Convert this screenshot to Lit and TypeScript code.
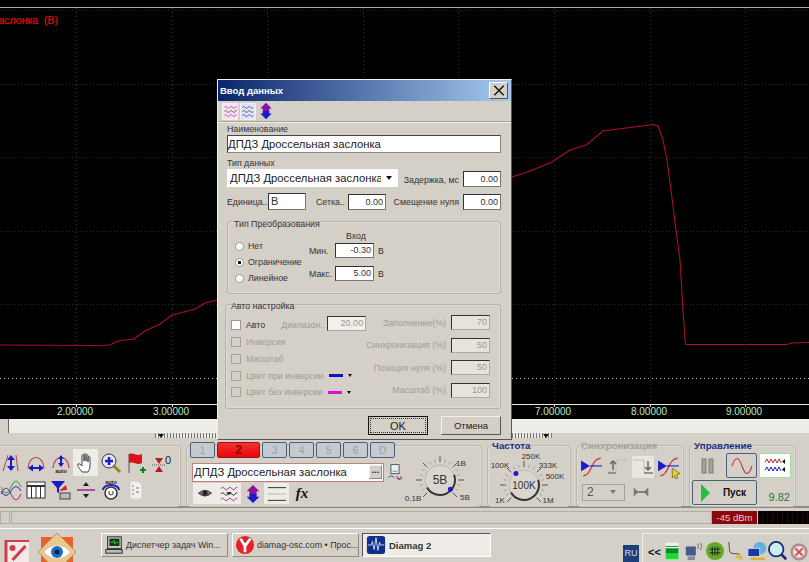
import {LitElement, css, html, svg} from 'lit';
import {customElement} from 'lit/decorators.js';

const CHANNEL = 'ДПДЗ Дроссельная заслонка';

const TRACE =
  '0,345 100,345.5 110,345 118,341 134,339 145,331 160,324 172,315 180,313 195,309 205,303 215,300.5 ' +
  '300,280 512,177 530,171 552,162 570,150 586,145 603,131 634,127 654,124.5 658,126 663,140 667,160 ' +
  '671,190 676,230 680,260 683,310 685,340 686,344.5 787,344.5 792,343 809,342.5';

const icon = (content: unknown, w = 22, h = 22) =>
  html`<svg width=${w} height=${h} viewBox="0 0 22 22" fill="none">${content}</svg>`;

const arrowsV = (c = '#1a1ac8') => svg`<path d="M11 3l4 5h-3v6h3l-4 5-4-5h3V8H7z" fill=${c}/>`;
const arrowsH = svg`<path d="M3 16l5-3.500V15h6v-2.500l5 3.500-5 3.500V17H8v2.500z" fill="#1a1ac8"/>`;
const arch = svg`<path d="M3 16C4 2 18 2 19 16" stroke="#c04048" stroke-width="1.200"/>`;
const triple = svg`
  <path d="M2 5q2-3 4 0t4 0 4 0 4 0 2-1" stroke="#a020a0"/>
  <path d="M2 11q2-3 4 0t4 0 4 0 4 0 2-1" stroke="#222"/>
  <path d="M2 17q2-3 4 0t4 0 4 0 4 0 2-1" stroke="#a020a0"/>`;
const updown = svg`
  <path d="M11 1l7 7h-3v3H7V8H4z" fill="#8a10a0"/>
  <path d="M11 21l7-7h-3v-3H7v3H4z" fill="#1a1ac8"/>`;
const trigger = svg`
  <path d="M1 5l8 5-8 5z" fill="#1a1ac8"/>
  <path d="M3 19C11 19 10 3 19 3" stroke="#d04040" stroke-width="1.200"/>
  <path d="M9 10h11" stroke="#1a1ac8"/>`;

const LEFT_TOP = [
  icon(svg`<path d="M3 19L8 3M16 3l2 16" stroke="#c04048"/>${arrowsV()}`),
  icon(svg`${arch}${arrowsH}`),
  icon(svg`${arch}<path d="M11 3l3 4h-2v4h2l-3 4-3-4h2V7H8z" fill="#1a1ac8"/><text x="11" y="21" text-anchor="middle" class="tiny">auto</text>`),
  icon(svg`<path d="M7 20c-2-3-5-6-4-8 1-1 3 1 4 2V4c0-2 2-2 2 0v5V3c0-2 2-2 2 0v6V4c0-2 2-2 2 0v6V6c0-2 2-2 2 0v8c0 3-1 4-2 6z" fill="#fff" stroke="#444"/>`),
  icon(svg`<path d="M13 13l7 7" stroke="#a08020" stroke-width="3"/><circle cx="9" cy="9" r="7" fill="#dfe8f5" stroke="#333"/><path d="M9 5v8M5 9h8" stroke="#1a1ac8" stroke-width="2.500"/>`),
  icon(svg`<path d="M4 2v19" stroke="#555"/><path d="M4 2c5-2 8 3 13 0v9c-5 3-8-2-13 0z" fill="#e01018"/><path d="M15 18h6M18 15v6" stroke="#108020" stroke-width="2"/>`),
  icon(svg`<path d="M2 13h14" stroke="#555" stroke-dasharray="1 1"/><path d="M5 6l4 6 4-6zM5 20l4-6 4 6z" fill="#c01820"/><text x="15" y="12" class="zero">0</text>`),
];

const LEFT_BOTTOM = [
  icon(svg`<path d="M1 15q5-12 10 0t10 0" stroke="#a020a0"/><path d="M1 8q5 12 10 0t10 0" stroke="#30a030"/><path d="M1 12q5 9 10 0t10 0" stroke="#2030c0"/>`),
  icon(svg`<rect x="2" y="3" width="18" height="16" fill="#fff" stroke="#333"/><path d="M2 7h18" stroke="#333" stroke-width="2"/><path d="M6.500 7v12M11 7v12M15.500 7v12" stroke="#333"/>`),
  icon(svg`<path d="M1 2h14l-6 7v5l-2-1V9z" fill="#1a1ac8"/><path d="M9 12l7-6 1 5z" fill="#e02020"/><rect x="10" y="14" width="10" height="6" fill="#bbb" stroke="#444"/>`),
  icon(svg`<path d="M2 11h18" stroke="#a020a0" stroke-width="1.500"/><path d="M11 3l3 4H8zM11 19l3-4H8z" fill="#222"/>`),
  icon(svg`<text x="11" y="5" text-anchor="middle" class="tiny">auto</text><path d="M3 11a8 5 0 0 1 16 0" stroke="#1a1ac8" stroke-width="2"/><circle cx="11" cy="14" r="6" fill="#fff" stroke="#333" stroke-width="1.500"/><path d="M9 12v3q2 2 4 0v-3" stroke="#333"/>`),
  icon(svg`<path d="M5 2h8l4 4v14H5z" fill="#f2f0ea" stroke="#ccc"/><path d="M7 7h2M7 11h2M7 15h2M11 9h3M11 13h3" stroke="#777"/>`),
];

const DIALOG_TOOLS = [
  ['tool pink', icon(triple, 15, 15)],
  ['tool blue', icon(svg`
    <path d="M2 5q2-3 4 0t4 0 4 0 4 0" stroke="#1a1ac8"/>
    <path d="M2 11q2-3 4 0t4 0 4 0 4 0" stroke="#222"/>
    <path d="M2 17q2-3 4 0t4 0 4 0 4 0" stroke="#1a1ac8"/>`, 15, 15)],
  ['tool', icon(updown, 18, 18)],
] as const;

const TRAY = [
  svg`<rect x="3" y="2" width="14" height="18" fill="#e8f5e8"/><path d="M3 6h14" stroke="#084"/><rect x="3" y="8" width="14" height="6" fill="#0a8a20"/><rect x="3" y="14" width="14" height="6" fill="#10e030"/>`,
  svg`<rect x="2" y="6" width="11" height="10" fill="#4a5a90"/><rect x="4" y="17" width="8" height="4" fill="#889"/><path d="M15 3q2 3 0 6M18 2q3 4 0 8" stroke="#667"/>`,
  svg`<circle cx="11" cy="11" r="10" fill="#6aa82a"/><path d="M5 9h12M5 13h12M8 6v10M11 6v10M14 6v10" stroke="#123"/>`,
  svg`<path d="M3 1l1 10q1 3 4 3h6l3 6" stroke="#445" fill="none"/><path d="M12 14l7 3-3 4-6-3z" fill="#d8c040"/>`,
  svg`<circle cx="14" cy="8" r="7" fill="#60b0e0"/><rect x="1" y="8" width="13" height="9" fill="#1a3aa0" stroke="#dde"/><rect x="4" y="18" width="16" height="3" fill="#e0b040"/>`,
  svg`<circle cx="9" cy="9" r="8" fill="#c8f0f0" stroke="#1a2a70" stroke-width="2"/><path d="M15 15l5 5" stroke="#1a2a70" stroke-width="3"/>`,
  svg`<circle cx="11" cy="12" r="8" fill="#e8e4e0" stroke="#b09090" stroke-width="3"/><path d="M7 8l8 8M15 8l-8 8" stroke="#e04050" stroke-width="2"/>`,
];

type Tick = {angle: number; long: boolean};

// ticks on a knob run clockwise from lower left to lower right
const knobTicks = (count: number, every: number): Tick[] =>
  Array.from({length: count}, (_, i) => ({
    angle: 135 + (270 * i) / (count - 1),
    long: i % every === 0,
  }));

const knob = (
  cx: number,
  cy: number,
  r: number,
  value: string,
  markerAngle: number,
  labels: [string, number, number][],
  w: number,
  h: number,
) => {
  const rad = (a: number) => (a * Math.PI) / 180;
  return html`<svg class="dial" width=${w} height=${h} viewBox="0 0 ${w} ${h}">
    ${knobTicks(19, 3).map((t) => {
      const inner = r + 3;
      const outer = r + (t.long ? 9 : 6);
      return svg`<line
        x1=${cx + inner * Math.cos(rad(t.angle))}
        y1=${cy + inner * Math.sin(rad(t.angle))}
        x2=${cx + outer * Math.cos(rad(t.angle))}
        y2=${cy + outer * Math.sin(rad(t.angle))}
        stroke=${t.long ? '#555' : '#a5a299'}
      />`;
    })}
    <circle cx=${cx} cy=${cy} r=${r} fill="#d9d6cf" stroke="#bbb8b0" />
    <path
      d="M${cx + r * Math.cos(rad(150))} ${cy + r * Math.sin(rad(150))}
         A${r} ${r} 0 0 0 ${cx + r * Math.cos(rad(-20))} ${cy + r * Math.sin(rad(-20))}"
      fill="none"
      stroke="#333"
      stroke-width="2"
    />
    <circle
      cx=${cx + (r - 1) * Math.cos(rad(markerAngle))}
      cy=${cy + (r - 1) * Math.sin(rad(markerAngle))}
      r="2.500"
      fill="#1a1ac8"
    />
    <text x=${cx} y=${cy + 4} text-anchor="middle" class="knob-value">${value}</text>
    ${labels.map(
      ([t, x, y]) => svg`<text x=${x} y=${y} text-anchor="middle" class="knob-label">${t}</text>`,
    )}
  </svg>`;
};

@customElement('app-root')
export class AppRoot extends LitElement {
  static styles = css`
    :host {
      display: block;
      position: relative;
      width: 809px;
      height: 562px;
      overflow: hidden;
      background: #d4d0c8;
      font-family: 'Liberation Sans', Arial, sans-serif;
      font-size: 8.800px;
      color: #333;
    }

    svg {
      display: block;
      flex: none;
    }

    .tiny {
      font: bold 5.500px 'Liberation Sans', sans-serif;
      fill: #222;
    }

    .zero {
      font: 11px 'Liberation Sans', sans-serif;
      fill: #222;
    }

    .plot {
      width: 809px;
      height: 419px;
      background: #000;
    }

    .plot text {
      font: 10px 'Liberation Sans', sans-serif;
    }

    .plot text.caption {
      font-size: 10.500px;
      white-space: pre;
      stroke: #e01010;
      stroke-width: 0.200px;
    }

    .strip {
      display: flex;
      height: 14px;
      background: #efede7;
    }

    .strip-btn {
      width: 8px;
      background: #d4d0c8;
      border-right: 1px solid #666;
    }

    .splitter {
      display: flex;
      height: 7px;
      padding-left: 155px;
    }

    .splitter-handle {
      display: flex;
      justify-content: space-between;
      align-items: center;
      box-sizing: border-box;
      width: 397px;
      height: 5px;
      padding: 0 3px;
      background: repeating-linear-gradient(90deg, #777 0 1px, #e8e6e0 1px 3px);
    }

    .splitter-handle i {
      border: 3px solid transparent;
      border-top: 4px solid #111;
      border-bottom: 0;
    }

    .panels {
      display: flex;
      gap: 5px;
      box-sizing: border-box;
      height: 68px;
      padding-top: 5px;
      margin-left: -5px;
      border-bottom: 2px solid #8f8c85;
    }

    .panel {
      box-sizing: border-box;
      height: 62px;
      border: 1px solid #bdb9b0;
      border-radius: 4px;
      box-shadow: inset 0 0 0 1px #dfdcd5;
    }

    .panel-title {
      margin: -6px 0 0 4px;
      font-size: 9.800px;
      font-weight: bold;
      line-height: 12px;
      color: #20308a;
      white-space: nowrap;
    }

    .panel-title.off {
      color: #a5a299;
    }

    .tools {
      display: grid;
      grid-template-columns: repeat(7, 25px);
      grid-auto-rows: 27px;
      align-content: center;
      width: 186px;
      padding-left: 2px;
    }

    .cell {
      display: flex;
      align-items: center;
      justify-content: center;
    }

    .cell.on {
      background: #eeece7;
    }

    .channel {
      position: relative;
      width: 296px;
      padding-left: 3px;
    }

    .tabs {
      display: flex;
      gap: 2px;
      margin-top: -4px;
    }

    .tab {
      display: flex;
      align-items: center;
      justify-content: center;
      box-sizing: border-box;
      width: 25px;
      height: 16px;
      border: 1px solid #4a6078;
      border-radius: 2px;
      background: #c3cbd0;
      color: #99a0a5;
      font-size: 10px;
    }

    .tab.active {
      width: 43px;
      background: linear-gradient(#f43030, #e80808);
      border-color: #a01010;
      color: #8a0808;
      font-size: 12px;
      font-weight: bold;
    }

    .channel-row {
      display: flex;
      align-items: center;
      margin: 4px 0 1px 2px;
      gap: 2px;
    }

    .channel-input {
      display: flex;
      align-items: center;
      justify-content: space-between;
      box-sizing: border-box;
      width: 192px;
      height: 19px;
      padding: 0 1px 0 1px;
      border: 1px solid #c08080;
      background: #fff;
      font-size: 11.300px;
      color: #222;
    }

    .more {
      width: 13px;
      height: 14px;
      background: #d4d0c8;
      border: 1px solid #888;
      border-top-color: #eee;
      border-left-color: #eee;
      box-sizing: border-box;
      text-align: center;
      line-height: 8px;
      font-size: 9px;
      font-weight: bold;
    }

    .channel-tools {
      display: flex;
      margin-left: 3px;
    }

    .channel-tools .cell {
      width: 23px;
      height: 21px;
    }

    .channel-tools .cell.wide {
      width: 25px;
    }

    .channel-tools .light {
      background: #eeece7;
    }

    .fx {
      margin-left: 3px;
      font: italic bold 15px 'Liberation Serif', serif;
      color: #111;
    }

    .channel .dial {
      position: absolute;
      right: 0;
      top: -2px;
    }

    .dial text.knob-label {
      font: 8px 'Liberation Sans', sans-serif;
      fill: #333;
    }

    .dial text.knob-value {
      font: 12px 'Liberation Sans', sans-serif;
      fill: #333;
    }

    .freq .dial text.knob-value {
      font-size: 10px;
    }

    .freq {
      width: 84px;
    }

    .sync {
      width: 108px;
    }

    .sync-row {
      display: flex;
      align-items: center;
      gap: 3px;
      margin: 3px 0 0 3px;
    }

    .sync-row.lower {
      margin-left: 5px;
    }

    .sync-select {
      display: flex;
      align-items: center;
      justify-content: space-between;
      box-sizing: border-box;
      width: 43px;
      height: 17px;
      padding: 0 8px 0 4px;
      border: 1px solid #a5a299;
      font-size: 12px;
      color: #555;
      margin-right: 1px;
    }

    .sync-select i,
    .select i {
      border: 3px solid transparent;
      border-top: 4px solid #777;
      border-bottom: 0;
    }

    .control {
      width: 107px;
    }

    .control-grid {
      display: grid;
      grid-template-columns: 32px 31px 32px;
      grid-template-rows: 25px 25px;
      gap: 2px;
      margin: 1px 0 0 2px;
    }

    .btn-plain,
    .btn-sine,
    .btn-traces {
      display: flex;
      align-items: center;
      justify-content: center;
    }

    .btn-sine {
      border: 1px solid #4a6078;
      border-radius: 2px;
    }

    .btn-traces {
      background: #fff;
      border: 1px solid #a0e0a0;
    }

    .btn-run {
      grid-column: span 2;
      display: flex;
      align-items: center;
      justify-content: space-between;
      padding: 0 10px 0 8px;
      border: 1px solid #4a6078;
      border-radius: 2px;
      font-size: 10px;
      font-weight: bold;
      color: #111;
    }

    .btn-run i {
      border: 7px solid transparent;
      border-left: 9px solid #20c040;
      border-right: 0;
      border-top-width: 9px;
      border-bottom-width: 9px;
    }

    .reading {
      display: flex;
      align-items: flex-end;
      justify-content: flex-end;
      padding: 0 1px 2px 0;
      font-size: 11px;
      color: #1a7a3a;
    }

    .status {
      display: flex;
      align-items: flex-start;
      height: 20px;
      padding-top: 3px;
      box-sizing: border-box;
    }

    .status-cell {
      box-sizing: border-box;
      width: 10px;
      height: 13px;
      border: 1px solid #b0ada5;
    }

    .status-fill {
      flex: 1;
      box-sizing: border-box;
      height: 13px;
      margin-left: 1px;
      border: 1px solid #b0ada5;
    }

    .dbm {
      width: 45px;
      height: 13px;
      background: #8a0810;
      color: #eec8c8;
      font-size: 9.500px;
      line-height: 13px;
      text-align: center;
    }

    .meter {
      width: 51px;
      height: 13px;
      margin-left: 1px;
      background: repeating-linear-gradient(90deg, #000 0 4px, #2a0405 4px 5px);
    }

    .taskbar {
      display: flex;
      box-sizing: border-box;
      height: 34px;
      border-top: 1px solid #fff;
      padding-top: 4px;
      overflow: hidden;
    }

    .start-icons {
      display: flex;
      align-items: flex-end;
      gap: 9px;
      width: 101px;
      height: 29px;
    }

    .task {
      display: flex;
      align-items: center;
      gap: 2px;
      box-sizing: border-box;
      width: 127px;
      height: 24px;
      margin-right: 4px;
      padding-left: 2px;
      border: 1px solid #8f8c85;
      border-top-color: #fff;
      border-left-color: #fff;
      font-size: 8.900px;
      white-space: nowrap;
      color: #333;
    }

    .task.active {
      width: 129px;
      margin-left: -1px;
      padding-left: 3px;
      gap: 3px;
      background: #eeece6;
      border-color: #fff;
      border-top-color: #555;
      border-left-color: #555;
      font-size: 9.500px;
      font-weight: bold;
    }

    .lang {
      align-self: flex-end;
      width: 16px;
      height: 17px;
      margin: 0 3px 0 auto;
      background: #1a3f7a;
      color: #dde;
      font-size: 9px;
      line-height: 17px;
      text-align: center;
    }

    .tray {
      display: flex;
      align-items: flex-end;
      gap: 1px;
      box-sizing: border-box;
      width: 167px;
      height: 29px;
      padding-left: 5px;
      border-top: 1px solid #f0eee8;
      border-left: 1px solid #f0eee8;
    }

    .chevrons {
      width: 18px;
      font-size: 11px;
      font-weight: bold;
      color: #111;
      line-height: 20px;
    }

    /* dialog sits over the application, like a window on a desktop */
    .dialog {
      position: absolute;
      left: 217px;
      top: 79px;
      box-sizing: border-box;
      width: 295px;
      height: 361px;
      background: #d4d0c8;
      border: 1px solid #f2f0ea;
      border-right-color: #555;
      border-bottom-color: #555;
    }

    .titlebar {
      display: flex;
      align-items: center;
      justify-content: space-between;
      height: 21px;
      padding: 0 3px 0 2px;
      background: linear-gradient(90deg, #0a246a, #a6caf0);
      color: #fff;
      font-size: 9.500px;
      font-weight: bold;
    }

    .close {
      box-sizing: border-box;
      width: 19px;
      height: 17px;
      display: flex;
      align-items: center;
      justify-content: center;
      background: #d4d0c8;
      border: 1px solid #555;
      border-top-color: #fff;
      border-left-color: #fff;
    }

    .dialog-tools {
      display: flex;
      gap: 2px;
      align-items: center;
      height: 20px;
      padding: 0 0 0 4px;
      border-bottom: 1px solid #a5a299;
      box-shadow: 0 1px 0 #f0eee8;
    }

    .tool {
      display: flex;
      align-items: center;
      justify-content: center;
      width: 16px;
      height: 17px;
    }

    .tool.pink {
      background: #f7e2f4;
      border: 1px solid #f2f0ea;
      box-sizing: border-box;
    }

    .tool.blue {
      background: #dfe4f7;
      border: 1px solid #f2f0ea;
      box-sizing: border-box;
    }

    .form {
      display: flex;
      flex-direction: column;
      padding: 1px 10px 0 9px;
    }

    .cap {
      height: 12px;
      line-height: 12px;
      white-space: nowrap;
    }

    .cap.type {
      margin-top: 4px;
    }

    .cap.delay {
      flex: 1;
      margin: 3px 4px 0 0;
      text-align: right;
    }

    .cap.unit {
      width: 41px;
    }

    .cap.grid-step {
      width: 32px;
      margin-left: 10px;
    }

    .cap.offset {
      flex: 1;
      margin-right: 4px;
      text-align: right;
    }

    .name-field {
      display: flex;
      align-items: center;
      box-sizing: border-box;
      height: 18px;
      padding-left: 0;
      border: 1px solid #444;
      border-right-color: #888;
      border-bottom-color: #888;
      background: #fff;
      font-size: 11.300px;
      color: #222;
    }

    .row {
      display: flex;
      align-items: center;
    }

    .row.gapped {
      margin-top: 6px;
    }

    .select {
      display: flex;
      align-items: center;
      box-sizing: border-box;
      width: 171px;
      height: 18px;
      padding: 0 6px 0 3px;
      background: #fff;
      font-size: 11.300px;
      color: #222;
    }

    .select span {
      flex: 1;
      overflow: hidden;
      white-space: nowrap;
    }

    .select i {
      border-top-color: #111;
      margin-left: 5px;
    }

    .field {
      flex: none;
      box-sizing: border-box;
      width: 38px;
      height: 16px;
      padding: 0 2px;
      background: #fff;
      border: 1px solid #333;
      border-right-color: #777;
      border-bottom-color: #777;
      font-size: 9px;
      line-height: 14px;
      text-align: right;
      color: #333;
    }

    .field.low {
      margin-top: 2px;
    }

    .field.left {
      text-align: left;
      font-size: 11px;
      height: 17px;
    }

    .field.tall {
      width: 39px;
      height: 15px;
      line-height: 13px;
    }

    .field.off {
      background: #e6e3dd;
      color: #9a978f;
      border-right-color: #aaa;
      border-bottom-color: #aaa;
    }

    .field.off.bright {
      background: #f2f0ec;
    }

    .group {
      box-sizing: border-box;
      border: 1px solid #b5b2a9;
      border-radius: 3px;
      box-shadow: inset 0 0 0 1px #dedbd4;
    }

    .legend {
      height: 11px;
      line-height: 11px;
      white-space: nowrap;
    }

    .group-conv {
      height: 73px;
      margin-top: 11px;
    }

    .group-conv .legend {
      margin: -3px 0 0 6px;
    }

    .conv-body {
      display: flex;
    }

    .radios {
      box-sizing: border-box;
      width: 81px;
      padding: 8px 0 0 7px;
    }

    .radio-row {
      display: flex;
      align-items: center;
      gap: 4px;
      height: 16px;
    }

    .radio {
      box-sizing: border-box;
      width: 9px;
      height: 9px;
      border-radius: 50%;
      background: #fff;
      border: 1px solid #999;
    }

    .radio.on {
      background: radial-gradient(#111 0 1.500px, #fff 2px);
    }

    .range-cap {
      height: 12px;
      line-height: 12px;
      text-align: center;
      width: 66px;
      margin-left: 14px;
    }

    .range-row {
      display: flex;
      align-items: center;
      height: 15px;
      margin-top: 1px;
    }

    .range-row + .range-row {
      margin-top: 8px;
    }

    .range-row .cap {
      width: 26px;
    }

    .range-row b {
      margin-left: 4px;
      font-weight: normal;
    }

    .group-auto {
      height: 105px;
      margin: 10px 0 0 -2px;
    }

    .group-auto .legend {
      margin: -4px 0 0 5px;
    }

    .auto-body {
      display: flex;
      justify-content: space-between;
      padding: 3px 10px 0 5px;
    }

    .auto-left {
      display: flex;
      flex-direction: column;
      width: 136px;
      padding-top: 2px;
    }

    .check-row {
      display: flex;
      align-items: center;
      gap: 5px;
      height: 16.750px;
      color: #a09d95;
      white-space: nowrap;
    }

    .check-row.on {
      color: #333;
    }

    .check {
      flex: none;
      box-sizing: border-box;
      width: 10px;
      height: 10px;
      border: 1px solid #a5a299;
    }

    .check-row.on .check {
      background: #fff;
      border-color: #999;
    }

    .check-row .field {
      margin-top: -3px;
    }

    .range-label {
      flex: 1;
      text-align: right;
      margin-right: -3px;
      color: #a09d95;
    }

    .swatch {
      display: inline-block;
      width: 14px;
      height: 3px;
    }

    .drop {
      border: 2.500px solid transparent;
      border-top: 3px solid #111;
      border-bottom: 0;
    }

    .auto-right {
      display: flex;
      flex-direction: column;
      gap: 7.500px;
    }

    .auto-right .row {
      justify-content: flex-end;
      gap: 5px;
      color: #a09d95;
      white-space: nowrap;
    }

    .actions {
      display: flex;
      justify-content: flex-end;
      gap: 13px;
      margin-top: 7px;
    }

    .push {
      display: flex;
      align-items: center;
      justify-content: center;
      box-sizing: border-box;
      width: 60px;
      height: 19px;
      border: 1px solid #555;
      border-top-color: #f2f0ea;
      border-left-color: #f2f0ea;
      font-size: 9.500px;
      color: #222;
    }

    .push.default {
      border: 1px solid #111;
      outline: 1px dotted #333;
      outline-offset: -3px;
      font-size: 11px;
    }
  `;

  renderPlot() {
    const grid = [10, 84, 157, 231, 304];
    const marks = [2, 3, 4, 5, 6, 7, 8, 9];
    return html`<svg class="plot" width="809" height="419" viewBox="0 0 809 419">
      <path d="M0 7.500H809" stroke="#a8a8a8" />
      ${grid.map(
        (y) => svg`<path d="M0 ${y}.500H809" stroke="#2c2620" stroke-dasharray="1 2" />`,
      )}
      ${marks.map((n) => {
        const x = Math.round(76 + 95.6 * (n - 2));
        return svg`
          <path d="M${x}.500 8V404" stroke="#303030" stroke-dasharray="1 3" />
          <path d="M${x}.500 404V407" stroke="#ddd" />
          <text x=${x - 1} y="415" text-anchor="middle" fill="#bfe8bf">${n.toFixed(5)}</text>`;
      })}
      <path d="M0 378.500H809" stroke="#c0c0c0" stroke-dasharray="1 3" />
      <path d="M0 404.500H809" stroke="#e8e8e8" />
      <polyline points=${TRACE} fill="none" stroke="#a81228" stroke-width="1.100" />
      <text class="caption" x="58" y="24" text-anchor="end" fill="#e01010">${CHANNEL}  (В)</text>
    </svg>`;
  }

  renderChannel() {
    return html`<div class="panel channel">
      <div class="tabs">
        ${['1', '2', '3', '4', '5', '6', 'D'].map(
          (t) => html`<div class="tab ${t === '2' ? 'active' : ''}">${t}</div>`,
        )}
      </div>
      <div class="channel-row">
        <div class="channel-input">${CHANNEL}<span class="more">...</span></div>
        ${icon(
          svg`<rect x="6" y="2" width="10" height="11" fill="#eee" stroke="#345"/><path d="M8 10h6" stroke="#3a3"/>
              <path d="M3 18a4 4 0 0 1 7 0M13 18a4 4 0 0 0 7 0" stroke="#223ac0"/><path d="M13 16l3 4 3-4" stroke="#c01820"/>`,
          18,
          20,
        )}
      </div>
      <div class="channel-tools">
        <div class="cell light">
          ${icon(svg`<path d="M3 10q8-7 16 0-8 7-16 0z" fill="#777" stroke="#222"/><circle cx="11" cy="10" r="3" fill="#222"/>`, 18, 18)}
        </div>
        <div class="cell wide light">${icon(svg`<path d="M8 9h6l-3 3z" fill="#111"/>${triple}`, 20, 20)}</div>
        <div class="cell">${icon(updown, 20, 20)}</div>
        <div class="cell wide light">
          ${icon(svg`<path d="M1 4h20M1 18h20" stroke="#222"/><path d="M1 11h20" stroke="#777" stroke-dasharray="1 1"/>`, 22, 20)}
        </div>
        <div class="cell"><span class="fx">fx</span></div>
      </div>
      ${knob(
        45,
        36,
        15,
        '5В',
        42,
        [
          ['1В', 66, 22],
          ['0.1В', 18, 57],
          ['5В', 70, 56],
        ],
        86,
        62,
      )}
    </div>`;
  }

  renderSync() {
    return html`<div class="panel sync">
      <div class="panel-title off">Синхронизация</div>
      <div class="sync-row">
        ${icon(trigger, 24, 24)}
        ${icon(svg`<path d="M1 16h8V4h11" stroke="#c0bdb5"/><path d="M1 17h8" stroke="#555"/><path d="M6 14V5M3 8l3-3 3 3" stroke="#666" stroke-width="1.500"/>`, 22, 22)}
        ${icon(svg`<rect width="22" height="22" fill="#e8e6e0"/><path d="M1 4h11v13h9" stroke="#c0bdb5"/><path d="M12 17h9" stroke="#555"/><path d="M16 5v9M13 11l3 3 3-3" stroke="#666" stroke-width="1.500"/>`, 22, 22)}
        ${icon(svg`${trigger}<path d="M14 12l7 5-3 1 1 3-2 1-1-3-2 2z" fill="#f0d020" stroke="#333" stroke-width=".5"/>`, 24, 24)}
      </div>
      <div class="sync-row lower">
        <div class="sync-select">2<i></i></div>
        ${icon(svg`<path d="M3 6l5 5-5 5zM19 6l-5 5 5 5z" fill="#777"/><path d="M6 11h10" stroke="#777" stroke-width="2"/>`, 24, 20)}
      </div>
    </div>`;
  }

  renderControl() {
    return html`<div class="panel control">
      <div class="panel-title">Управление</div>
      <div class="control-grid">
        <div class="btn-plain">
          ${icon(svg`<rect x="5" y="4" width="4" height="14" fill="#a5a299" stroke="#7f7c75"/><rect x="12" y="4" width="4" height="14" fill="#a5a299" stroke="#7f7c75"/>`)}
        </div>
        <div class="btn-sine">
          ${icon(svg`<path d="M1 11q5-15 10 0t10 0" stroke="#c04040" stroke-width="1.200"/>`, 26, 22)}
        </div>
        <div class="btn-traces">
          ${icon(svg`
            <path d="M1 7l2-3 2 4 2-4 2 4 2-4 2 4 2-4 2 4" stroke="#c02030"/>
            <path d="M1 15l2-3 2 4 2-4 2 4 2-4 2 4 2-4 2 4" stroke="#2020c0"/>
            <path d="M21 4l-3 2.500 3 2.500zM21 12l-3 2.500 3 2.500z" fill="#111"/>`, 26, 22)}
        </div>
        <div class="btn-run"><i></i>Пуск</div>
        <div class="reading">9.82</div>
      </div>
    </div>`;
  }

  renderBottom() {
    return html`<div class="strip"><div class="strip-btn"></div></div>
      <div class="splitter">
        <div class="splitter-handle"><i></i><i></i></div>
      </div>
      <div class="panels">
        <div class="panel tools">
          ${LEFT_TOP.map((ic, i) => html`<div class="cell ${i === 3 ? 'on' : ''}">${ic}</div>`)}
          ${LEFT_BOTTOM.map((ic) => html`<div class="cell">${ic}</div>`)}
        </div>
        ${this.renderChannel()}
        <div class="panel freq">
          <div class="panel-title">Частота</div>
          ${knob(
            36,
            33,
            15,
            '100K',
            235,
            [
              ['100K', 12, 16],
              ['250K', 43, 7],
              ['333K', 60, 16],
              ['500K', 67, 27],
              ['1K', 12, 51],
              ['1M', 60, 51],
            ],
            82,
            56,
          )}
        </div>
        ${this.renderSync()} ${this.renderControl()}
      </div>
      <div class="status">
        <div class="status-cell"></div>
        <div class="status-fill"></div>
        <div class="dbm">-45 dBm</div>
        <div class="meter"></div>
      </div>
      <div class="taskbar">
        <div class="start-icons">
          ${icon(svg`<rect x="1" y="0" width="28" height="22" fill="#c8404a"/><rect x="4" y="2" width="22" height="20" fill="#f4e8e8"/><path d="M9 20l13-14" stroke="#d03a48" stroke-width="3"/><circle cx="9" cy="8" r="3" fill="#d03a48"/>`, 29, 22)}
          <svg width="38" height="29" viewBox="0 0 38 29">
            <rect x="3" y="4" width="32" height="25" fill="#e8622a" />
            <path d="M0 19L19 0l19 19-19 19z" fill="#e8c890" stroke="#b8965a" />
            <path d="M6 19q13-13 26 0-13 13-26 0z" fill="#fff" />
            <circle cx="19" cy="19" r="6" fill="#1c6ec8" />
            <circle cx="19" cy="19" r="2.500" fill="#123" />
          </svg>
        </div>
        <div class="task">
          ${icon(svg`<rect x="4" y="2" width="15" height="13" fill="#c8c4bc" stroke="#222"/><rect x="6" y="4" width="11" height="8" fill="#0a3a1a"/><path d="M7 8h3l1-2 1 4 1-2h3" stroke="#3c3"/><rect x="2" y="16" width="18" height="4" fill="#bbb" stroke="#222"/>`, 20, 20)}
          <span>Диспетчер задач Win...</span>
        </div>
        <div class="task">
          ${icon(svg`<circle cx="11" cy="11" r="10" fill="#e4202a"/><path d="M6 4l5 8v7M17 4l-6 8" stroke="#fff" stroke-width="3"/>`, 20, 20)}
          <span>diamag-osc.com • Прос...</span>
        </div>
        <div class="task active">
          ${icon(svg`<rect x="1" y="1" width="20" height="20" rx="3" fill="#10308a"/><path d="M2 11h4l1-4 2 9 2-13 2 14 2-9 1 3h4" stroke="#cfe0ff"/>`, 20, 20)}
          <span>Diamag 2</span>
        </div>
        <div class="lang">RU</div>
        <div class="tray">
          <div class="chevrons">&lt;&lt;</div>
          ${TRAY.map((t) => icon(t, 20, 22))}
        </div>
      </div>`;
  }

  renderDialog() {
    const leftRows = [
      ['Инверсия', ''],
      ['Масштаб', ''],
      ['Цвет при инверсии', '#1010c0'],
      ['Цвет без инверсии', '#e010d0'],
    ];
    const rightRows = [
      ['Заполнение(%)', '70'],
      ['Синхронизация (%)', '50'],
      ['Позиция нуля (%)', '50'],
      ['Масштаб (%)', '100'],
    ];
    return html`<div class="dialog">
      <div class="titlebar">
        <span>Ввод данных</span>
        <div class="close">
          ${icon(svg`<path d="M4 4l14 14M18 4L4 18" stroke="#111" stroke-width="2"/>`, 16, 15)}
        </div>
      </div>
      <div class="dialog-tools">
        ${DIALOG_TOOLS.map(([cls, ic]) => html`<div class=${cls}>${ic}</div>`)}
      </div>
      <div class="form">
        <div class="cap">Наименование</div>
        <div class="name-field">${CHANNEL}</div>
        <div class="cap type">Тип данных</div>
        <div class="row">
          <div class="select"><span>${CHANNEL}</span><i></i></div>
          <div class="cap delay">Задержка, мс</div>
          <div class="field low">0.00</div>
        </div>
        <div class="row gapped">
          <div class="cap unit">Единица..</div>
          <div class="field left">В</div>
          <div class="cap grid-step">Сетка..</div>
          <div class="field">0.00</div>
          <div class="cap offset">Смещение нуля</div>
          <div class="field">0.00</div>
        </div>
        <div class="group group-conv">
          <div class="legend">Тип Преобразования</div>
          <div class="conv-body">
            <div class="radios">
              <div class="radio-row"><div class="radio"></div>Нет</div>
              <div class="radio-row"><div class="radio on"></div>Ограничение</div>
              <div class="radio-row"><div class="radio"></div>Линейное</div>
            </div>
            <div>
              <div class="range-cap">Вход</div>
              <div class="range-row">
                <div class="cap">Мин.</div>
                <div class="field tall">-0.30</div>
                <b>В</b>
              </div>
              <div class="range-row">
                <div class="cap">Макс.</div>
                <div class="field tall">5.00</div>
                <b>В</b>
              </div>
            </div>
          </div>
        </div>
        <div class="group group-auto">
          <div class="legend">Авто настройка</div>
          <div class="auto-body">
            <div class="auto-left">
              <div class="check-row on">
                <div class="check"></div>
                Авто
                <span class="range-label">Диапазон..</span>
                <div class="field tall off bright">20.00</div>
              </div>
              ${leftRows.map(
                ([label, colour]) => html`<div class="check-row">
                  <div class="check"></div>
                  ${label}
                  ${colour
                    ? html`<span class="swatch" style="background:${colour}"></span><i class="drop"></i>`
                    : ''}
                </div>`,
              )}
            </div>
            <div class="auto-right">
              ${rightRows.map(
                ([label, value]) => html`<div class="row">
                  ${label}
                  <div class="field tall off">${value}</div>
                </div>`,
              )}
            </div>
          </div>
        </div>
        <div class="actions">
          <div class="push default">OK</div>
          <div class="push">Отмена</div>
        </div>
      </div>
    </div>`;
  }

  render() {
    return html`${this.renderPlot()}${this.renderBottom()}${this.renderDialog()}`;
  }
}
